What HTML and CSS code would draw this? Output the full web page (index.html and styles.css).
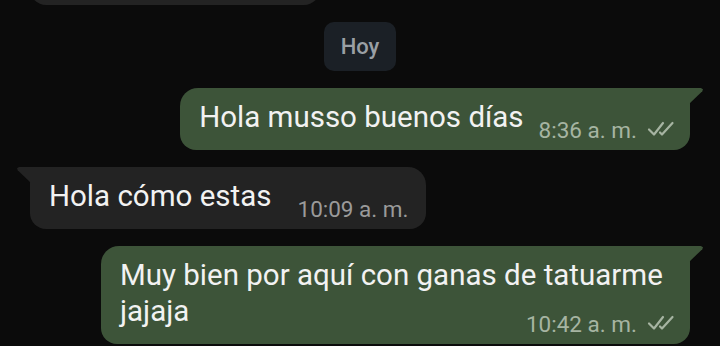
FILE: index.html
```html
<!DOCTYPE html>
<html>
<head>
    <title>Chat</title>
    <link rel="stylesheet" href="styles.css">
</head>
<body>
    <div class="chat">
        <div class="bubble in cut"></div>

        <div class="day">Hoy</div>

        <div class="bubble out">
            <span class="text">Hola musso buenos días</span>
            <span class="meta">8:36 a. m.
                <svg class="ticks" width="28" height="16" viewBox="0 0 28 16"><path d="M2 8.5 L7 13.5 L16 2 M13 11.5 L15 13.5 L25.5 2" fill="none" stroke="currentColor" stroke-width="2.2" stroke-linecap="round" stroke-linejoin="round"/></svg>
            </span>
        </div>

        <div class="bubble in">
            <span class="text">Hola cómo estas</span>
            <span class="meta">10:09 a. m.</span>
        </div>

        <div class="bubble out">
            <span class="text">Muy bien por aquí con ganas de tatuarme jajaja</span>
            <span class="meta">10:42 a. m.
                <svg class="ticks" width="28" height="16" viewBox="0 0 28 16"><path d="M2 8.5 L7 13.5 L16 2 M13 11.5 L15 13.5 L25.5 2" fill="none" stroke="currentColor" stroke-width="2.2" stroke-linecap="round" stroke-linejoin="round"/></svg>
            </span>
        </div>
    </div>
</body>
</html>
```

FILE: styles.css
```css
body { margin: 0; background: #0b0b0b; font-family: Roboto, "Noto Sans", sans-serif; overflow: hidden; }
.chat { display: flex; flex-direction: column; gap: 17px; }

.day { align-self: center; background: #1b2026; color: #9a9fa4; font-size: 22px; font-weight: 500; line-height: 26px; padding: 11.5px 17px; border-radius: 10px; }

.bubble { position: relative; display: flow-root; box-sizing: border-box; max-width: 589px; padding: 11px 15px 9.5px 19px; font-size: 29.5px; line-height: 36px; color: #f2f2f2; }
.bubble.out { align-self: flex-end; margin-right: 30px; background: #3d5439; border-radius: 18px 0 16px 16px; }
.bubble.in { align-self: flex-start; margin-left: 30px; background: #232323; border-radius: 0 18px 16px 16px; padding-right: 17px; }
.bubble.cut { width: 290px; height: 62px; margin-top: -57px; }

/* tails */
.bubble.out::after, .bubble.in::before { content: ""; position: absolute; top: 0; width: 14px; height: 16px; }
.bubble.out::after { right: -13px; background: #3d5439; clip-path: polygon(0 0, 85% 0, 100% 8%, 95% 20%, 0 100%); }
.bubble.in::before { left: -13px; background: #232323; clip-path: polygon(100% 0, 15% 0, 0 8%, 5% 20%, 100% 100%); }
.bubble.cut::before { display: none; }

.meta { float: right; display: flex; align-items: center; gap: 10px; margin: 19.5px 0 0 15px; font-size: 22.5px; line-height: 22px; color: #a6b4a2; }
.bubble.in .meta { margin-left: 26px; color: #9a9a9a; }
.ticks { display: block; margin-top: -2px; }
```
